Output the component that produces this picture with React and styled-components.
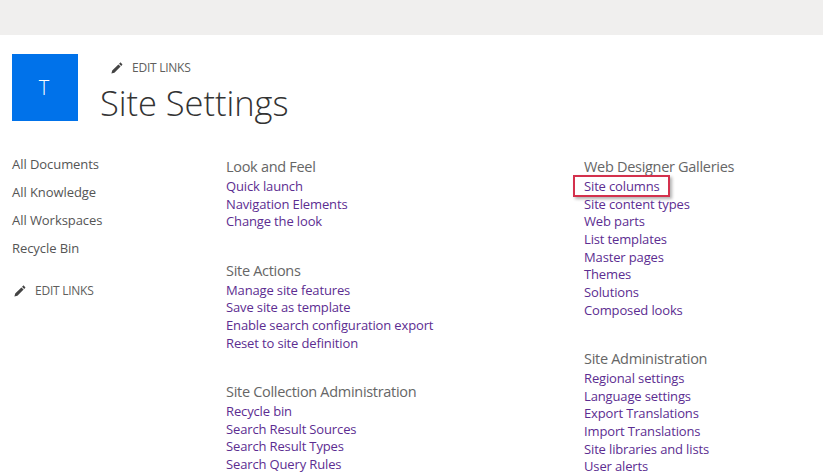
import React from 'react';
import styled, { createGlobalStyle } from 'styled-components';

const Global = createGlobalStyle`
  html, body { margin: 0; padding: 0; background: #fff; }
  body { font-family: "Open Sans", "Noto Sans", "Liberation Sans", sans-serif; }
`;
const Page = styled.div`
  width: 823px; height: 474px; overflow: hidden; background: #fff;
`;
const TopBar = styled.div`height: 35px; background: #f0efee;`;
const Header = styled.header`
  display: flex; padding: 19px 0 0 12px; height: 67px;
`;
const Logo = styled.div`
  width: 66px; height: 67px; background: #0072ea; color: #fff;
  display: flex; align-items: center; justify-content: center;
  font-size: 20px; font-weight: 300; padding: 0 2px 0 0; box-sizing: border-box;
`;
const HeaderText = styled.div`
  margin-left: 22px; display: flex; flex-direction: column;
`;
const EditLinks = styled.div`
  display: flex; align-items: center; gap: ${p => p.$gap}px;
  font-size: 12px; line-height: 16px; color: #605e5c; letter-spacing: -0.25px;
  margin-left: ${p => p.$indent}px;
`;
const HeaderEdit = styled.div`margin-top: 6px;`;
const Title = styled.h1`
  margin: 5px 0 0; font-size: 34.5px; line-height: 44px; font-weight: 300; color: #333;
  letter-spacing: -0.05px;
`;
const Body = styled.div`
  display: flex; padding: 29px 0 0 12px;
`;
const Nav = styled.nav`
  width: 214px; flex: none; display: flex; flex-direction: column;
`;
const NavItem = styled.div`
  font-size: 13px; line-height: 28px; height: 28px; color: #555; letter-spacing: -0.06px;
`;
const NavEdit = styled.div`margin-top: 21px;`;
const Column = styled.div`
  width: ${p => p.$w}px; flex: none; display: flex; flex-direction: column; gap: 28.5px;
  padding-top: 6px;
`;
const Group = styled.section`display: flex; flex-direction: column;`;
const GroupTitle = styled.div`
  font-size: 14.5px; line-height: 22px; color: #666; letter-spacing: -0.3px;
`;
const LinkList = styled.div`display: flex; flex-direction: column;`;
const SiteLink = styled.a`
  font-size: 13px; line-height: 17px; height: 17.7px; color: #5c2d91; letter-spacing: -0.14px;
  white-space: nowrap; position: relative; align-self: flex-start;
`;
const Highlight = styled.span`
  position: absolute; left: -11px; top: -3px; width: 93px; height: 18px;
  border: 2px solid #d4314d; box-shadow: 2px 2px 3px rgba(0,0,0,.3);
`;
const Pencil = () => (
  <svg width="12" height="12" viewBox="0 0 12 12" aria-hidden="true">
    <path fill="#444" d="M0.4 11.6l.8-3 6.2-6.2 2.2 2.2-6.2 6.2zM8 1.8l.9-.9c.4-.4.8-.4 1.2 0l1 1c.4.4.4.8 0 1.2l-.9.9z" />
  </svg>
);

const Links = ({ items, mark }) => (
  <LinkList>
    {items.map(i => (
      <SiteLink key={i}>{i}{i === mark && <Highlight />}</SiteLink>
    ))}
  </LinkList>
);

const col1 = [
  ['Look and Feel', ['Quick launch', 'Navigation Elements', 'Change the look']],
  ['Site Actions', ['Manage site features', 'Save site as template', 'Enable search configuration export', 'Reset to site definition']],
  ['Site Collection Administration', ['Recycle bin', 'Search Result Sources', 'Search Result Types', 'Search Query Rules']],
];
const col2 = [
  ['Web Designer Galleries', ['Site columns', 'Site content types', 'Web parts', 'List templates', 'Master pages', 'Themes', 'Solutions', 'Composed looks']],
  ['Site Administration', ['Regional settings', 'Language settings', 'Export Translations', 'Import Translations', 'Site libraries and lists', 'User alerts']],
];

export default function App() {
  return (
    <Page>
      <Global />
      <TopBar />
      <Header>
        <Logo>T</Logo>
        <HeaderText>
          <HeaderEdit><EditLinks $indent={11} $gap={9}><Pencil />EDIT LINKS</EditLinks></HeaderEdit>
          <Title>Site Settings</Title>
        </HeaderText>
      </Header>
      <Body>
        <Nav>
          {['All Documents', 'All Knowledge', 'All Workspaces', 'Recycle Bin'].map(n => <NavItem key={n}>{n}</NavItem>)}
          <NavEdit><EditLinks $indent={2} $gap={9}><Pencil />EDIT LINKS</EditLinks></NavEdit>
        </Nav>
        <Column $w={358}>
          {col1.map(([t, l]) => <Group key={t}><GroupTitle>{t}</GroupTitle><Links items={l} /></Group>)}
        </Column>
        <Column $w={220}>
          {col2.map(([t, l]) => <Group key={t}><GroupTitle>{t}</GroupTitle><Links items={l} mark="Site columns" /></Group>)}
        </Column>
      </Body>
    </Page>
  );
}
